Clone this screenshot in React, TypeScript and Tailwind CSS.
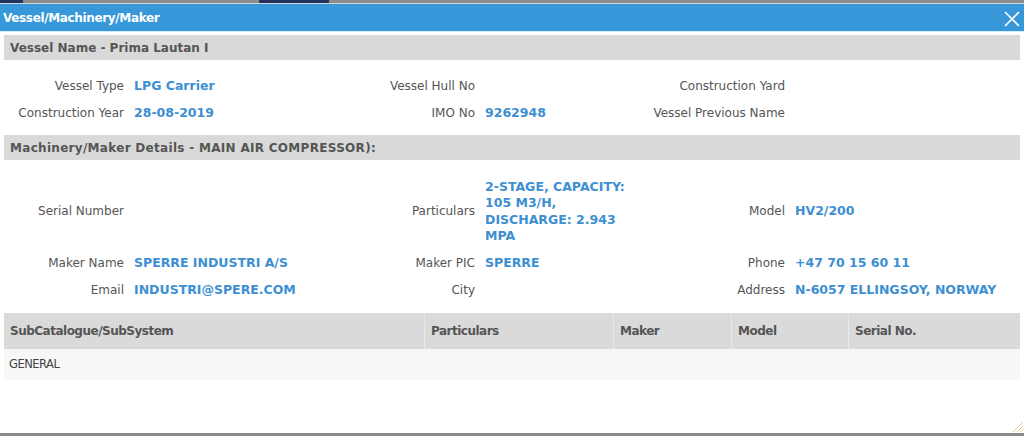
const font = "font-['Tahoma','DejaVu_Sans',sans-serif]";

const Label = ({ children }: { children?: React.ReactNode }) => (
  <div className="text-right text-[12px] text-[#555555]">{children}</div>
);

const Value = ({ children }: { children?: React.ReactNode }) => (
  <div className="pt-[1px] text-[12.5px] font-bold text-[#3d8fd1]">{children}</div>
);

const SectionBar = ({ title, wide }: { title: string; wide?: boolean }) => (
  <div
    className={`flex h-[25px] items-center bg-[#d9d9d9] pl-[6px] text-[12px] font-bold text-[#555555] ${
      wide ? "tracking-[0.3px]" : ""
    }`}
  >
    {title}
  </div>
);

const cols = "grid grid-cols-[120px_206px_125px_155px_135px_1fr] gap-x-[10px]";

const App = () => {
  return (
    <div className={`${font} relative flex h-[436px] w-[1024px] flex-col overflow-hidden bg-white`}>
      {/* window strip above the dialog */}
      <div className="flex h-[3px] bg-[#8c8c8c]">
        <div className="w-[23px] bg-[#22305c]" />
        <div className="w-[236px]" />
        <div className="w-[70px] bg-[#22305c]" />
      </div>
      <div className="h-[1px] bg-[#d5d5d5]" />

      {/* dialog header */}
      <div className="flex h-[28px] items-center justify-between border-b border-[#cdeef8] bg-[#3797d9] pl-[3px] pr-[4px]">
        <span className="text-[12px] font-bold tracking-[-0.35px] text-white">Vessel/Machinery/Maker</span>
        <svg width="16" height="16" viewBox="0 0 16 16" className="mt-[2px]">
          <path d="M1 1L15 15M15 1L1 15" stroke="white" strokeWidth="1.6" fill="none" />
        </svg>
      </div>

      <div className="flex flex-1 flex-col px-[4px] pt-[3px]">
        <SectionBar title="Vessel Name - Prima Lautan I" />

        <div className={`${cols} mt-[12px] grid-rows-[27px_27px] items-center`}>
          <Label>Vessel Type</Label>
          <Value>LPG Carrier</Value>
          <Label>Vessel Hull No</Label>
          <Value />
          <Label>Construction Yard</Label>
          <Value />

          <Label>Construction Year</Label>
          <Value>28-08-2019</Value>
          <Label>IMO No</Label>
          <Value>9262948</Value>
          <Label>Vessel Previous Name</Label>
          <Value />
        </div>

        <div className="mt-[9px]">
          <SectionBar title="Machinery/Maker Details - MAIN AIR COMPRESSOR):" wide />
        </div>

        <div className={`${cols} mt-[13px] grid-rows-[76px_27px_27px] items-center`}>
          <Label>Serial Number</Label>
          <Value />
          <Label>Particulars</Label>
          <div className="pt-[1px] text-[12.5px] font-bold leading-[16.3px] text-[#3d8fd1]">
            2-STAGE, CAPACITY: 105 M3/H, DISCHARGE: 2.943 MPA
          </div>
          <Label>Model</Label>
          <Value>HV2/200</Value>

          <Label>Maker Name</Label>
          <Value>SPERRE INDUSTRI A/S</Value>
          <Label>Maker PIC</Label>
          <Value>SPERRE</Value>
          <Label>Phone</Label>
          <Value>+47 70 15 60 11</Value>

          <Label>Email</Label>
          <Value>INDUSTRI@SPERE.COM</Value>
          <Label>City</Label>
          <Value />
          <Label>Address</Label>
          <Value>N-6057 ELLINGSOY, NORWAY</Value>
        </div>

        {/* sub catalogue table */}
        <div className="mt-[10px] w-[1016px]">
          <div className="grid h-[36px] grid-cols-[421px_189px_118px_117px_1fr] bg-[#dadada] text-[12px] font-bold tracking-[-0.5px] text-[#555555]">
            <div className="flex items-center border-r border-[#e8e8e8] pl-[6px]">SubCatalogue/SubSystem</div>
            <div className="flex items-center border-r border-[#e8e8e8] pl-[6px]">Particulars</div>
            <div className="flex items-center border-r border-[#e8e8e8] pl-[6px]">Maker</div>
            <div className="flex items-center border-r border-[#e8e8e8] pl-[6px]">Model</div>
            <div className="flex items-center pl-[6px]">Serial No.</div>
          </div>
          <div className="flex h-[31px] items-center bg-[#f7f7f7] pl-[5px] text-[11.5px] tracking-[-0.5px] text-[#444444]">
            GENERAL
          </div>
        </div>

        <div className="mt-auto h-[3px] -mx-[4px] bg-[#8c8c8c]" />
      </div>

      {/* resize grip */}
      <svg width="14" height="14" viewBox="0 0 14 14" className="absolute bottom-[3px] right-0">
        <path d="M13 3L3 13M13 7L7 13M13 10L10 13" stroke="#e6cf8a" strokeWidth="1" fill="none" />
      </svg>
    </div>
  );
};

export default App;
